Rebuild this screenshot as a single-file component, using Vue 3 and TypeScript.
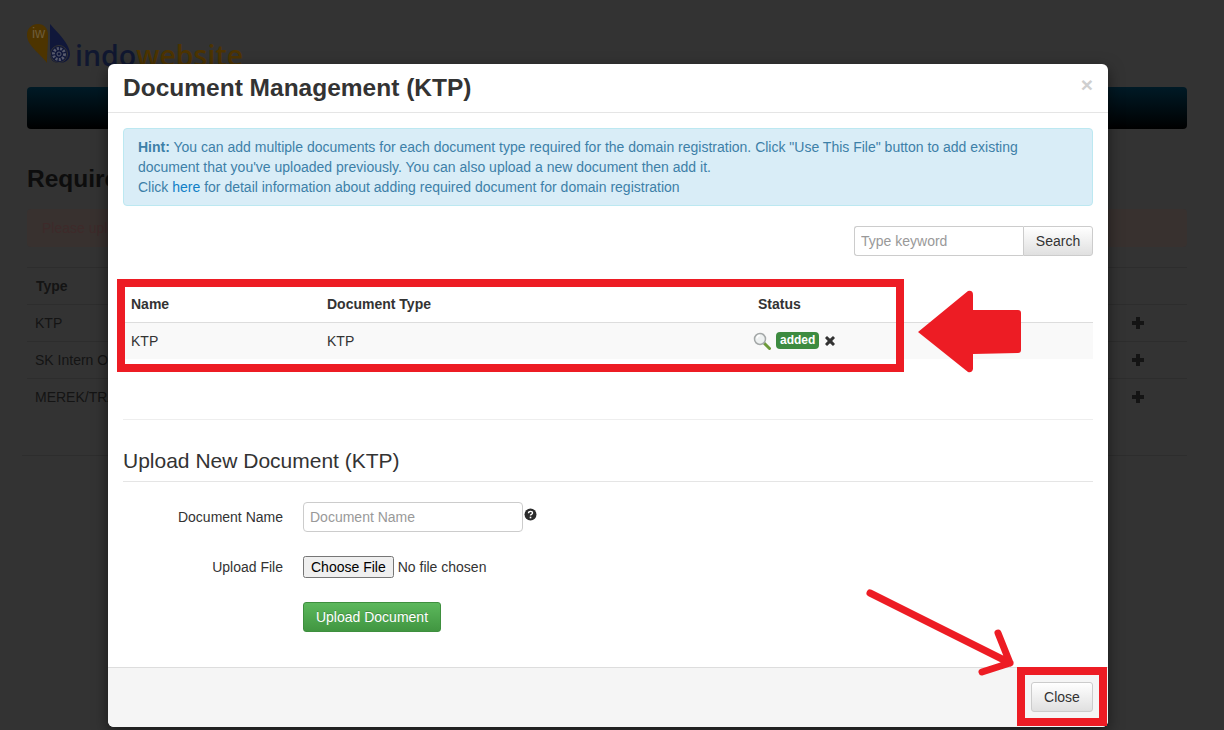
<script setup lang="ts">
const bgRows = ['KTP', 'SK Intern Organisasi', 'MEREK/TRADEMARK']
</script>

<template>
  <div class="screen">
    <div class="page">
      <div class="logo">
        <svg class="logo-mark" width="48" height="63" viewBox="0 0 48 63">
          <path d="M20 39 C14 30 0 22 0 11 C0 4 5 0 11 0 C17 0 21 4 21 11 C21 22 20 30 20 39 Z" fill="#4d3400" />
          <text x="5" y="14" class="logo-iw">iw</text>
          <path d="M23 0 C30 8 43 20 43 30 C43 36 38 39 32 39 C26 39 23 35 23 30 Z" fill="#10173a" />
          <circle cx="32" cy="30" r="8.500" fill="#10173a" stroke="#333" stroke-width="1" />
          <circle cx="32" cy="30" r="5.500" fill="none" stroke="#585b6c" stroke-width="3" stroke-dasharray="2 1.300" />
          <circle cx="32" cy="30" r="2" fill="#10173a" stroke="#585b6c" stroke-width="1" />
        </svg>
        <span class="logo-text"><span class="indo">indo</span><span class="web">website</span></span>
      </div>
      <div class="navbar"></div>
      <h2 class="bg-title">Required Documents</h2>
      <div class="bg-alert">Please upload required documents</div>
      <div class="bg-table">
        <div class="bg-row bg-head"><b>Type</b></div>
        <div v-for="r in bgRows" :key="r" class="bg-row">
          <span>{{ r }}</span>
          <svg class="plus" width="12" height="12" viewBox="0 0 12 12"><path d="M4 0h4v4h4v4h-4v4h-4v-4h-4v-4h4z" fill="#141414" /></svg>
        </div>
      </div>
      <div class="bg-end"></div>
    </div>

    <div class="modal">
      <header class="modal-head">
        <h3>Document Management (KTP)</h3>
        <span class="close-x">×</span>
      </header>
      <div class="modal-body">
        <div class="hint">
          <b>Hint:</b> You can add multiple documents for each document type required for the domain registration. Click "Use This File" button to add existing document that you've uploaded previously. You can also upload a new document then add it.<br />
          Click <a>here</a> for detail information about adding required document for domain registration
        </div>
        <div class="search">
          <input class="search-input" placeholder="Type keyword" />
          <button class="btn search-btn">Search</button>
        </div>
        <div class="doc-table">
          <div class="doc-row doc-head">
            <span>Name</span><span>Document Type</span><span>Status</span>
          </div>
          <div class="doc-row doc-item">
            <span>KTP</span><span>KTP</span>
            <span class="status">
              <svg class="mag" width="18" height="18" viewBox="0 0 18 18">
                <path d="M11 11l5.500 5.500" stroke="#6d9a3a" stroke-width="3" stroke-linecap="round" />
                <circle cx="7" cy="7" r="5.500" fill="#eef1f1" stroke="#a4a8a8" stroke-width="1.500" />
                <path d="M4 6.500a3 3 0 0 1 3-3" fill="none" stroke="#fff" stroke-width="1.500" />
              </svg>
              <span class="badge">added</span>
              <svg class="remove" width="12" height="12" viewBox="0 0 12 12"><path d="M3 1l3 2.800L9 1l2 2-2.800 3L11 9l-2 2-3-2.800L3 11 1 9l2.800-3L1 3z" fill="#333" /></svg>
            </span>
          </div>
        </div>
        <hr class="divider" />
        <h4 class="upload-title">Upload New Document (KTP)</h4>
        <div class="form-row first">
          <label>Document Name</label>
          <input class="name-input" placeholder="Document Name" />
          <svg class="help" width="13" height="13" viewBox="0 0 13 13">
            <circle cx="6.500" cy="6.500" r="6" fill="#2b2b2b" />
            <path d="M4.500 5.200c0-1.200 .9-1.800 2-1.800s2 .6 2 1.600c0 1.400-2 1.400-2 2.600" fill="none" stroke="#fff" stroke-width="1.400" />
            <rect x="5.700" y="8.700" width="1.600" height="1.600" fill="#fff" />
          </svg>
        </div>
        <div class="form-row file-row">
          <label>Upload File</label>
          <input type="file" class="file" />
        </div>
        <div class="form-row btn-row">
          <button class="btn upload-btn">Upload Document</button>
        </div>
      </div>
      <footer class="modal-foot">
        <button class="btn close-btn">Close</button>
      </footer>
    </div>

    <svg class="marks" width="1224" height="730" viewBox="0 0 1224 730">
      <rect x="121" y="283" width="779" height="85" fill="none" stroke="#ed1c24" stroke-width="8" />
      <rect x="1021" y="671" width="82" height="51" fill="none" stroke="#ed1c24" stroke-width="8" />
      <path d="M918 332 L968 291 Q973 290 973 295 L973 310 L1018 310 Q1021 310 1021 313 L1021 350 Q1021 353 1018 353 L973 354 L973 369 Q972 373 968 372 Z" fill="#ed1c24" />
      <path d="M870 593 L1010 663 M998 633 L1010 663 L982 672" fill="none" stroke="#ed1c24" stroke-width="7" stroke-linecap="round" stroke-linejoin="round" />
    </svg>
  </div>
</template>

<style>
html, body { margin: 0; background: #333; }
</style>

<style scoped>
.screen {
  position: relative;
  width: 1224px;
  height: 730px;
  overflow: hidden;
  background: #333;
  font-family: "Liberation Sans", Arial, sans-serif;
  font-size: 14px;
  line-height: 20px;
  color: #333;
}
.page { padding: 24px 37px 0 27px; }
.logo { display: flex; height: 63px; position: relative; }
.logo-mark { width: 48px; height: 63px; flex: none; }
.logo-iw { font: 14px "Liberation Sans", sans-serif; fill: #6e5c3a; }
.logo-text {
  font-family: "Open Sans", sans-serif;
  font-size: 28.500px;
  font-weight: 600;
  line-height: 34px;
  margin: 14px 0 0 0;
}
.indo { color: #101730; }
.web { color: #4d3400; }
.navbar {
  height: 42px;
  border-radius: 4px;
  background: linear-gradient(#001a26, #000);
}
.bg-title {
  margin: 33px 0 0;
  font-size: 24.500px;
  line-height: 34px;
  color: #0d0d0d;
}
.bg-alert {
  margin-top: 13px;
  height: 38px;
  box-sizing: border-box;
  border-radius: 4px;
  padding: 9px 15px;
  background: #38312f;
  color: #3e2a2a;
}
.bg-table { margin-top: 20px; border-top: 1px solid #2d2d2d; }
.bg-row {
  height: 37px;
  box-sizing: border-box;
  border-bottom: 1px solid #2d2d2d;
  padding: 8px 8px;
  display: flex;
  justify-content: space-between;
  align-items: center;
  color: #141414;
}
.bg-row:last-child { border-bottom: 0; height: 36px; }
.bg-head { padding-left: 9px; }
.plus { margin-right: 35px; }
.bg-end { margin-top: 40px; border-top: 1px solid #2d2d2d; margin-left: -5px; }

.modal {
  position: absolute;
  left: 108px;
  top: 64px;
  width: 1000px;
  height: 663px;
  background: #fff;
  border-radius: 6px;
  box-shadow: 0 5px 15px rgba(0, 0, 0, .5);
  display: flex;
  flex-direction: column;
}
.modal-head {
  height: 49px;
  box-sizing: border-box;
  border-bottom: 1px solid #e5e5e5;
  padding: 0 15px;
  display: flex;
  justify-content: space-between;
}
.modal-head h3 {
  margin: 0;
  font-size: 24.500px;
  line-height: 47px;
  font-weight: 700;
}
.close-x {
  font-size: 21px;
  font-weight: 700;
  color: #cfcfcf;
  line-height: 42px;
}
.modal-body { flex: 1; padding: 15px 15px 0; }
.hint {
  box-sizing: border-box;
  height: 78px;
  padding: 8px 14px;
  background: #d9edf7;
  border: 1px solid #bce8f1;
  border-radius: 4px;
  color: #3d80a8;
}
.hint a { color: #0f7fc6; }
.search { display: flex; justify-content: flex-end; margin-top: 20px; }
.search-input, .name-input {
  box-sizing: border-box;
  height: 30px;
  padding: 5px 6px;
  border: 1px solid #ccc;
  font: 14px "Liberation Sans", Arial, sans-serif;
  color: #555;
  outline: none;
}
.search-input { width: 169px; border-radius: 3px 0 0 3px; border-right: 0; }
.search-input::placeholder, .name-input::placeholder { color: #999; opacity: 1; }
.btn {
  box-sizing: border-box;
  height: 30px;
  font: 14px "Liberation Sans", Arial, sans-serif;
  border: 1px solid #ccc;
  border-radius: 3px;
  padding: 0;
  white-space: nowrap;
  color: #333;
  background: linear-gradient(#fff, #e0e0e0);
}
.search-btn { width: 70px; border-radius: 0 3px 3px 0; }
.doc-table { margin-top: 12px; }
.doc-row {
  display: grid;
  grid-template-columns: 196px 431px 1fr;
  padding: 0 8px;
  align-items: center;
}
.doc-head { height: 55px; padding-top: 18px; box-sizing: border-box; font-weight: 700; border-bottom: 1px solid #ddd; }
.doc-item { height: 36px; padding-bottom: 1px; box-sizing: border-box; background: #f9f9f9; }
.status { display: flex; align-items: center; margin-left: -4px; }
.mag { margin-right: 5px; margin-left: -1px; }
.badge {
  background: #3d8b40;
  color: #fff;
  font-size: 12px;
  font-weight: 700;
  line-height: 17px;
  padding: 0 4px;
  border-radius: 4px;
  margin-right: 5px;
}
.divider { border: 0; border-top: 1px solid #eee; margin: 60px 0 0; }
.upload-title {
  margin: 0;
  height: 62px;
  box-sizing: border-box;
  padding-top: 29px;
  font-size: 21px;
  line-height: 24px;
  font-weight: 400;
  border-bottom: 1px solid #e5e5e5;
}
.form-row { display: flex; align-items: center; }
.form-row label { width: 160px; text-align: right; margin-right: 20px; flex: none; }
.first { margin-top: 20px; }
.name-input { width: 220px; border-radius: 4px; }
.help { align-self: flex-start; margin: 6px 0 0 1px; }
.file-row { margin-top: 20px; height: 30px; }
.file { font: 14px "Liberation Sans", Arial, sans-serif; color: #333; }
.btn-row { margin: 20px 0 0 180px; }
.upload-btn {
  width: 138px;
  color: #fff;
  border-color: #3e8f3e;
  background: linear-gradient(#5cb85c, #419641);
  text-shadow: 0 -1px 0 rgba(0, 0, 0, .2);
}
.modal-foot {
  height: 60px;
  box-sizing: border-box;
  padding: 14px 15px;
  background: #f5f5f5;
  border-top: 1px solid #ddd;
  border-radius: 0 0 6px 6px;
  display: flex;
  justify-content: flex-end;
}
.close-btn { width: 62px; }
.marks { position: absolute; left: 0; top: 0; pointer-events: none; }
</style>
